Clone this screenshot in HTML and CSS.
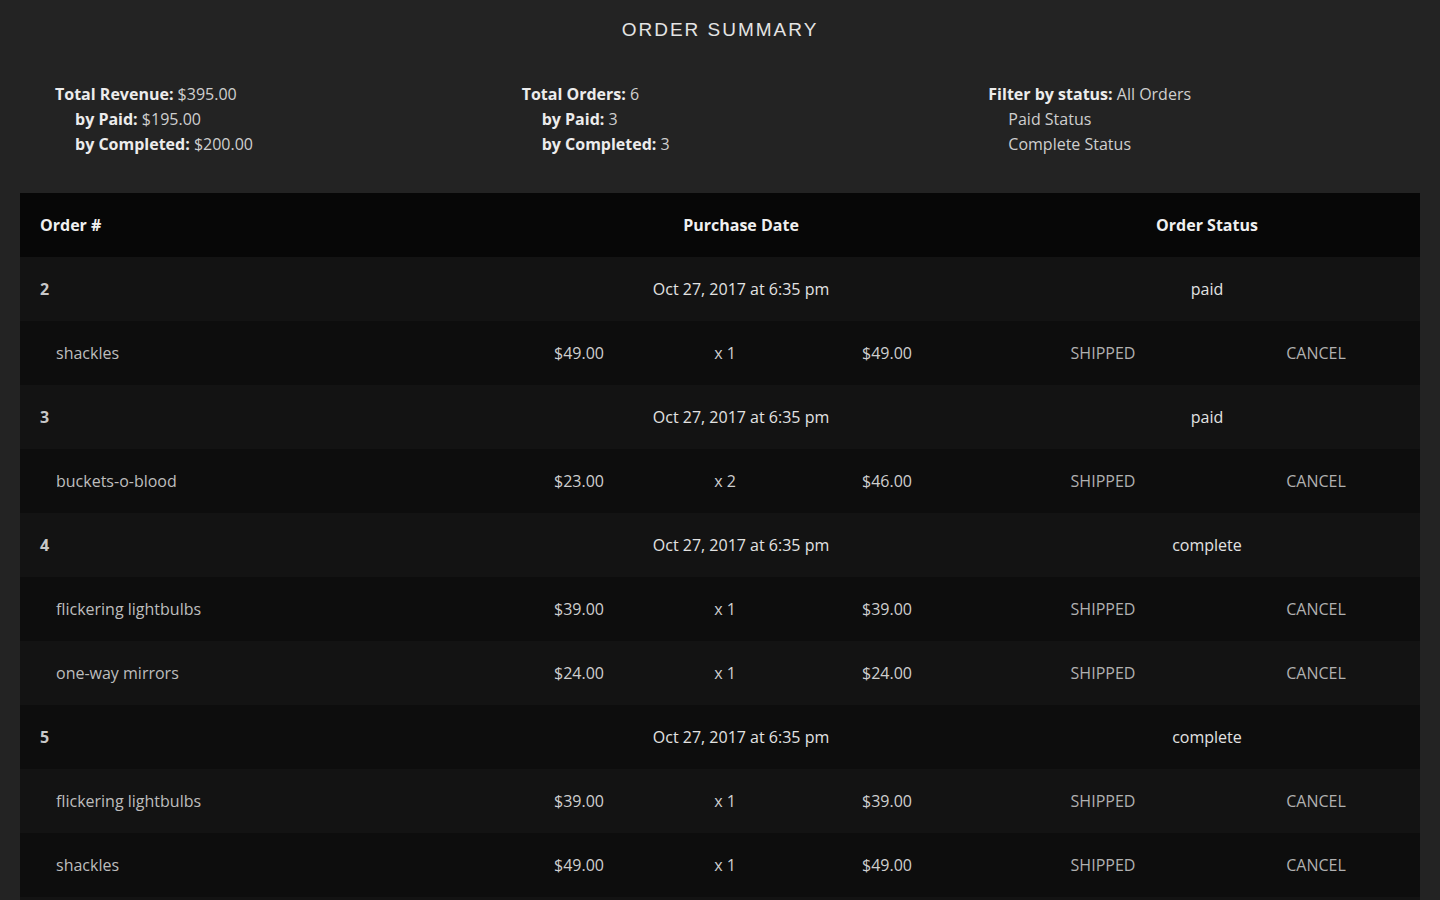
FILE: index.html
```html
<!DOCTYPE html>
<html>
<head>
<meta charset="utf-8">
<link rel="stylesheet" href="styles.css">
</head>
<body>
<div class="page">
  <h1 class="title">ORDER SUMMARY</h1>
  <div class="summary">
    <div class="sum-col">
      <div class="line"><b>Total Revenue:</b> $395.00</div>
      <div class="line sub"><b>by Paid:</b> $195.00</div>
      <div class="line sub"><b>by Completed:</b> $200.00</div>
    </div>
    <div class="sum-col">
      <div class="line"><b>Total Orders:</b> 6</div>
      <div class="line sub"><b>by Paid:</b> 3</div>
      <div class="line sub"><b>by Completed:</b> 3</div>
    </div>
    <div class="sum-col">
      <div class="line"><b>Filter by status:</b> All Orders</div>
      <div class="line sub">Paid Status</div>
      <div class="line sub">Complete Status</div>
    </div>
  </div>
  <div class="table">
    <div class="row head">
      <div class="c1">Order #</div>
      <div class="c2">Purchase Date</div>
      <div class="c3">Order Status</div>
    </div>
    <div class="row order">
      <div class="c1">2</div><div class="c2">Oct 27, 2017 at 6:35 pm</div><div class="c3">paid</div>
    </div>
    <div class="row item">
      <div class="name">shackles</div><div>$49.00</div><div>x 1</div><div>$49.00</div><div class="act">SHIPPED</div><div class="act">CANCEL</div>
    </div>
    <div class="row order">
      <div class="c1">3</div><div class="c2">Oct 27, 2017 at 6:35 pm</div><div class="c3">paid</div>
    </div>
    <div class="row item">
      <div class="name">buckets-o-blood</div><div>$23.00</div><div>x 2</div><div>$46.00</div><div class="act">SHIPPED</div><div class="act">CANCEL</div>
    </div>
    <div class="row order">
      <div class="c1">4</div><div class="c2">Oct 27, 2017 at 6:35 pm</div><div class="c3">complete</div>
    </div>
    <div class="row item">
      <div class="name">flickering lightbulbs</div><div>$39.00</div><div>x 1</div><div>$39.00</div><div class="act">SHIPPED</div><div class="act">CANCEL</div>
    </div>
    <div class="row item">
      <div class="name">one-way mirrors</div><div>$24.00</div><div>x 1</div><div>$24.00</div><div class="act">SHIPPED</div><div class="act">CANCEL</div>
    </div>
    <div class="row order">
      <div class="c1">5</div><div class="c2">Oct 27, 2017 at 6:35 pm</div><div class="c3">complete</div>
    </div>
    <div class="row item">
      <div class="name">flickering lightbulbs</div><div>$39.00</div><div>x 1</div><div>$39.00</div><div class="act">SHIPPED</div><div class="act">CANCEL</div>
    </div>
    <div class="row item">
      <div class="name">shackles</div><div>$49.00</div><div>x 1</div><div>$49.00</div><div class="act">SHIPPED</div><div class="act">CANCEL</div>
    </div>
    <div class="row order"></div>
  </div>
</div>
</body>
</html>
```

FILE: styles.css
```css
html, body {
  margin: 0;
  padding: 0;
  background: #232323;
}
body {
  font-family: "Open Sans", "Liberation Sans", sans-serif;
  font-size: 16px;
  color: #d8d8d8;
  overflow: hidden;
  height: 900px;
}
.page {
  padding: 0 20px;
}
.title {
  margin: 0;
  padding-top: 18px;
  height: 24px;
  line-height: 24px;
  text-align: center;
  font-family: "Liberation Sans", Arial, sans-serif;
  font-weight: normal;
  font-size: 19px;
  letter-spacing: 2px;
  color: #e4e4e4;
}
.summary {
  display: grid;
  grid-template-columns: 1fr 1fr 1fr;
  padding-top: 40px;
  padding-bottom: 36px;
}
.sum-col {
  padding-left: 35px;
}
.line {
  height: 25px;
  line-height: 25px;
  color: #cfcfcf;
}
.line b {
  color: #ececec;
  font-weight: 700;
}
.line.sub {
  padding-left: 20px;
}
.table {
  background: #0e0e0e;
}
.row {
  height: 64px;
  line-height: 22px;
  align-items: center;
}
.row:nth-child(even) {
  background: #131313;
}
.row:nth-child(odd) {
  background: #0d0d0d;
}
.row.head {
  background: #070707;
}
.head, .order {
  display: grid;
  grid-template-columns: 468px 466px 1fr;
  padding-left: 20px;
}
.head .c2, .head .c3, .order .c2, .order .c3 {
  text-align: center;
}
.c3 {
  padding-left: 20px;
}
.head div {
  font-weight: 700;
  font-size: 16px;
  color: #f0f0f0;
}
.order .c1 {
  font-weight: 700;
  font-size: 16px;
  color: #c8c8c8;
}
.order .c2, .order .c3 {
  color: #e2e2e2;
}
.item {
  display: grid;
  grid-template-columns: 464px 118px 174px 150px 282px 144px;
  padding-left: 36px;
  color: #cfcfcf;
}
.item div {
  text-align: center;
}
.item .name {
  text-align: left;
  color: #bdbdbd;
}
.item .act {
  color: #b0b0b0;
}
```
